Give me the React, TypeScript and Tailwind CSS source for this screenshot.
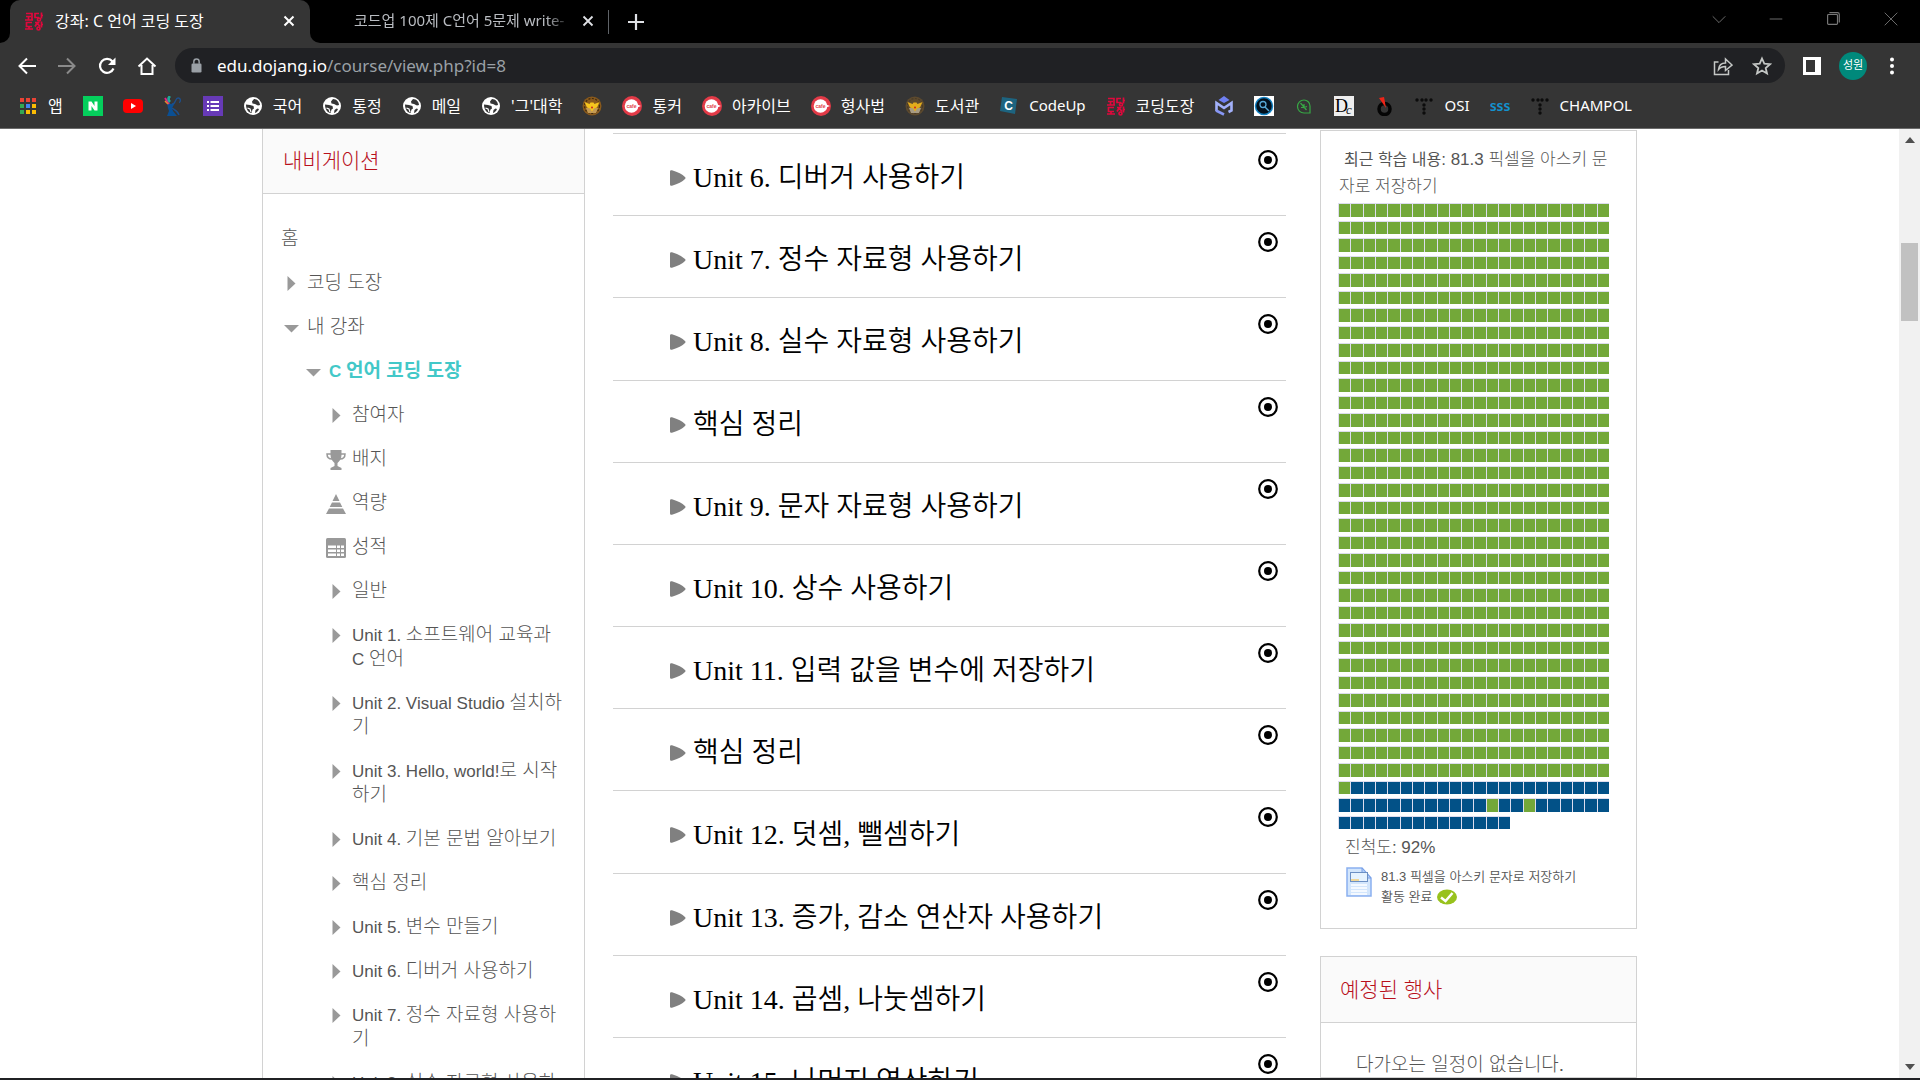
import type { ReactNode } from "react";

const UI = "font-['Noto_Sans','Noto_Sans_CJK_KR',sans-serif]";
const BODY = "font-['Liberation_Sans','Noto_Sans_CJK_KR',sans-serif]";
const SERIF = "font-['Liberation_Serif','Noto_Sans_CJK_KR',serif]";

/* ---------- bookmark icons ---------- */

function Box({ children }: { children: ReactNode }) {
  return (
    <svg viewBox="0 0 20 20" className="size-5 shrink-0" aria-hidden="true">
      {children}
    </svg>
  );
}

function AppsIcon() {
  const colors = ["#ea4335", "#ea4335", "#ea4335", "#34a853", "#4285f4", "#fbbc04", "#34a853", "#fbbc04", "#fbbc04"];
  return (
    <Box>
      {colors.map((c, i) => (
        <rect key={i} x={2 + (i % 3) * 6} y={2 + Math.floor(i / 3) * 6} width="4" height="4" fill={c} />
      ))}
    </Box>
  );
}

function NaverIcon() {
  return (
    <Box>
      <rect width="20" height="20" fill="#04cf5c" />
      <path d="M5.5 5.500h3l3 4.500V5.500h3v9h-3l-3-4.500v4.500h-3z" fill="#fff" />
    </Box>
  );
}

function YoutubeIcon() {
  return (
    <Box>
      <rect x="0" y="3" width="20" height="14" rx="4" fill="#f00" />
      <path d="M8 7l5 3-5 3z" fill="#fff" />
    </Box>
  );
}

function FigureIcon() {
  return (
    <Box>
      <path d="M4 7l4 1 4-1-3 5 1 3 4 5H4l2-5-1-3z" fill="#0a4f93" />
      <path d="M2 2l4 6" stroke="#e0218a" strokeWidth="2" />
      <path d="M7 0c-2 2-2 4 0 6" stroke="#1fa89a" strokeWidth="2.500" fill="none" />
      <path d="M9 8c4 0 3-6 6-6s3 4 1 4.500M9 12c3 2 6 3 7 7" stroke="#1d4f8c" strokeWidth="1.300" fill="none" />
      <path d="M2 5l3 3" stroke="#e8872b" strokeWidth="1.500" />
    </Box>
  );
}

function FormsIcon() {
  return (
    <Box>
      <rect width="20" height="20" fill="#673ab7" />
      <path d="M4 5h2v2H4zM7.500 5H16v2H7.500zM4 9h2v2H4zM7.500 9H16v2H7.500zM4 13h2v2H4zM7.500 13H16v2H7.500z" fill="#fff" />
    </Box>
  );
}

function GlobeIcon() {
  return (
    <Box>
      <circle cx="10" cy="10" r="9" fill="#fff" />
      <path d="M11 3l-2 2.500.5 2L12 8l3 1.500 2-.5c0-3-2.500-6-6-6z" fill="#353535" />
      <path d="M3 8.500l4 .5 3.500 1 .5 2.500-1.500 1-1 3.500C5.500 16.500 3 13.500 3 8.500z" fill="#353535" />
      <path d="M12 17l.5-3 2-1.500 1.500.5c-.8 2-2.200 3.500-4 4z" fill="#353535" />
      <path d="M4.500 12l2.500 1 1 3" stroke="#fff" strokeWidth="1.200" fill="none" />
    </Box>
  );
}

function PoliceIcon({ dim }: { dim?: boolean }) {
  return (
    <Box>
      <circle cx="10" cy="10" r="9.500" fill={dim ? "#5d4a2e" : "#8a5a1c"} />
      <circle cx="10" cy="10" r="7.500" fill="none" stroke={dim ? "#4a3c28" : "#3e2a10"} strokeWidth="1.200" strokeDasharray="2 1.500" />
      <path d="M4 12h12l-2 5H6z" fill={dim ? "#a79b84" : "#c39a55"} />
      <path d="M2.500 6l5 2 1-1.500h3l1 1.500 5-2-2.500 5.500-3 1L10 15.500 8 12.500l-3-1z" fill={dim ? "#e3ac1c" : "#f6c51e"} />
      <circle cx="10" cy="11.500" r="1" fill="#c22" />
    </Box>
  );
}

function CafeIcon() {
  return (
    <Box>
      <circle cx="10" cy="10" r="10" fill="#e23a47" />
      <circle cx="9.500" cy="10" r="6.800" fill="#fff" />
      <path d="M14 8l5 2-5 2z" fill="#fff" />
      <text x="9.500" y="12" textAnchor="middle" fontSize="5" fontWeight="700" fontFamily="Liberation Sans" fill="#e23a47">cafe</text>
    </Box>
  );
}

function CodeUpIcon() {
  return (
    <Box>
      <path d="M3 1l15 2-2 15-15-3z" fill="#1d6480" />
      <text x="9.500" y="14" textAnchor="middle" fontSize="12" fontWeight="700" fontFamily="Liberation Sans" fill="#fff">C</text>
    </Box>
  );
}

function DojangIcon() {
  return (
    <Box>
      <g stroke="#e0083c" strokeWidth="1.700" fill="none">
        <path d="M2 2.500h6v6M2 5.500h5M1 9h8M4.500 6v3" />
        <path d="M15 2.500h-4v4h4M17.500 1.500v6M17.500 4.500H19" />
        <circle cx="15" cy="8.500" r="1.500" />
        <path d="M8 11.500H2.500v4H8M5 15.500v2.500M1 18h8" />
        <path d="M11 11.500h4.500M13.500 11.500L11 15.500M13.500 12.500l2.500 3M17.500 10.500v6M17.500 13.500H19" />
        <circle cx="14.500" cy="17.500" r="1.500" />
      </g>
    </Box>
  );
}

function HexMIcon() {
  return (
    <Box>
      <path d="M4.500 4L10 0l5.500 4L10 7z" fill="#6f7ff0" />
      <path d="M2.500 15V7l7.500 5 7.500-5v7.500l-3 1.500" stroke="#a3b1fa" strokeWidth="2.600" fill="none" />
      <path d="M2 14.500l8 4" stroke="#8797f5" strokeWidth="2.600" />
    </Box>
  );
}

function MagnifierIcon() {
  return (
    <Box>
      <rect width="20" height="20" fill="#fff" />
      <circle cx="10" cy="10" r="8.500" fill="#03111d" stroke="#1182c4" strokeWidth="1.500" />
      <circle cx="9" cy="8.500" r="3" fill="none" stroke="#57a9d6" strokeWidth="1.300" />
      <path d="M11 11l4 4" stroke="#57a9d6" strokeWidth="1.500" />
    </Box>
  );
}

function LeafIcon() {
  return (
    <Box>
      <path d="M10 4a6 6 0 1 0 0 13h6v-7a6 6 0 0 0-6-6z" fill="none" stroke="#37a845" strokeWidth="1.200" />
      <path d="M6.500 7l6 7M10 8v3.500l3-1M7 11.500h3.500" stroke="#37a845" strokeWidth="1.200" fill="none" />
    </Box>
  );
}

function DcIcon() {
  return (
    <Box>
      <rect width="20" height="20" fill="#eee" />
      <text x="1" y="16" fontSize="18" fontFamily="Liberation Serif" fill="#000">D</text>
      <text x="12" y="18" fontSize="13" fontStyle="italic" fontFamily="Liberation Serif" fill="#222">c</text>
    </Box>
  );
}

function RingIcon() {
  return (
    <Box>
      <circle cx="10.500" cy="13" r="5.500" fill="none" stroke="#050505" strokeWidth="3.500" />
      <path d="M5 2l5-1 2 11z" fill="#ee2418" />
    </Box>
  );
}

function DotsIcon() {
  const dots = [[3, 4], [8, 4], [12, 4], [17, 4], [10, 9], [10, 13], [10, 17]];
  return (
    <Box>
      {dots.map(([x, y]) => (
        <circle key={`${x}-${y}`} cx={x} cy={y} r="1.700" fill="#0c0c0c" />
      ))}
    </Box>
  );
}

function SssIcon() {
  return (
    <Box>
      <text x="10" y="15" textAnchor="middle" fontSize="14" fontWeight="600" fontFamily="Noto Sans" fill="#1392cf">sss</text>
    </Box>
  );
}

type Bookmark = { icon: ReactNode; name: string; label?: string };

const bookmarks: Bookmark[] = [
  { icon: <AppsIcon />, name: "앱", label: "앱" },
  { icon: <NaverIcon />, name: "Naver" },
  { icon: <YoutubeIcon />, name: "YouTube" },
  { icon: <FigureIcon />, name: "학교" },
  { icon: <FormsIcon />, name: "Forms" },
  { icon: <GlobeIcon />, name: "국어", label: "국어" },
  { icon: <GlobeIcon />, name: "통정", label: "통정" },
  { icon: <GlobeIcon />, name: "메일", label: "메일" },
  { icon: <GlobeIcon />, name: "대학", label: "'그'대학" },
  { icon: <PoliceIcon />, name: "경찰" },
  { icon: <CafeIcon />, name: "통커", label: "통커" },
  { icon: <CafeIcon />, name: "아카이브", label: "아카이브" },
  { icon: <CafeIcon />, name: "형사법", label: "형사법" },
  { icon: <PoliceIcon dim />, name: "도서관", label: "도서관" },
  { icon: <CodeUpIcon />, name: "CodeUp", label: "CodeUp" },
  { icon: <DojangIcon />, name: "코딩도장", label: "코딩도장" },
  { icon: <HexMIcon />, name: "M" },
  { icon: <MagnifierIcon />, name: "검색" },
  { icon: <LeafIcon />, name: "Leaf" },
  { icon: <DcIcon />, name: "DC" },
  { icon: <RingIcon />, name: "Ring" },
  { icon: <DotsIcon />, name: "OSI", label: "OSI" },
  { icon: <SssIcon />, name: "sss" },
  { icon: <DotsIcon />, name: "CHAMPOL", label: "CHAMPOL" },
];

/* ---------- browser chrome ---------- */

function Stroke({ d, size, width = 2 }: { d: string; size: string; width?: number }) {
  return (
    <svg viewBox="0 0 20 20" className={size} fill="none" stroke="currentColor" strokeWidth={width} aria-hidden="true">
      <path d={d} />
    </svg>
  );
}

function TabStrip() {
  return (
    <div className="flex h-[43px] shrink-0 bg-black text-[15px] text-[#dfe1e5]">
      <div className="flex w-[10px] shrink-0 bg-[#353535]">
        <div className="w-full rounded-br-[10px] bg-black" />
      </div>
      <div className="flex w-[300px] shrink-0 items-center rounded-t-[10px] bg-[#353535] pr-3 pb-[2px] pl-[14px]">
        <DojangIcon />
        <span className="ml-[11px] flex-1 text-[16px] whitespace-nowrap text-white">강좌: C 언어 코딩 도장</span>
        <button aria-label="탭 닫기" className="text-white">
          <Stroke d="M5 5l10 10M15 5L5 15" size="size-[18px]" width={2.2} />
        </button>
      </div>
      <div className="flex w-[10px] shrink-0 bg-[#353535]">
        <div className="w-full rounded-bl-[10px] bg-black" />
      </div>
      <div className="flex w-[288px] shrink-0 items-center pb-[2px] pl-[34px]">
        <span className="w-[218px] whitespace-nowrap text-[#b9bcc1] [mask-image:linear-gradient(to_right,black_88%,transparent)]">
          코드업 100제 C언어 5문제 write-
        </span>
        <button aria-label="탭 닫기" className="ml-[7px] text-[#dfe1e5]">
          <Stroke d="M5 5l10 10M15 5L5 15" size="size-[18px]" />
        </button>
      </div>
      <div className="mt-[10px] h-6 w-px bg-[#5f6368]" />
      <button aria-label="새 탭" className="ml-[17px] text-[#dfe1e5]">
        <Stroke d="M10 2v16M2 10h16" size="size-5" width={2.2} />
      </button>
      <div className="ml-auto flex items-center pr-5 pb-[6px] text-[#777]">
        <button aria-label="탭 검색"><Stroke d="M3 7l7 7 7-7" size="size-[18px]" width={1} /></button>
        <button aria-label="최소화" className="ml-[39px]"><Stroke d="M3 10h14" size="size-[18px]" width={1} /></button>
        <button aria-label="최대화" className="ml-[39px]">
          <Stroke d="M4 6q0-1 1-1h9q1 0 1 1v9q0 1-1 1H5q-1 0-1-1zM6 3h9q2 0 2 2v9" size="size-[18px]" width={1.3} />
        </button>
        <button aria-label="닫기" className="ml-[40px]"><Stroke d="M3 3l14 14M17 3L3 17" size="size-[18px]" width={1} /></button>
      </div>
    </div>
  );
}

function Toolbar() {
  return (
    <div className="flex h-[44px] shrink-0 items-center bg-[#353535] pt-px text-white">
      <button aria-label="뒤로" className="ml-[17px]"><Stroke d="M19 10H2.500M10 2.500L2.500 10l7.500 7.500" size="size-5" /></button>
      <button aria-label="앞으로" className="ml-[20px] text-[#8a8a8a]"><Stroke d="M1 10h16.500M10 2.500l7.500 7.500-7.500 7.500" size="size-5" /></button>
      <button aria-label="새로고침" className="ml-[20px]">
        <svg viewBox="0 0 20 20" className="size-5" aria-hidden="true">
          <path d="M16.500 12.500A7 7 0 1 1 15.500 5.500" fill="none" stroke="currentColor" strokeWidth="2.200" />
          <path d="M18.500 1.500v7.500H11z" fill="currentColor" />
        </svg>
      </button>
      <button aria-label="홈" className="ml-[20px]"><Stroke d="M1.500 10.500L10 2.500l8.500 8M4.500 9v9h11V9" size="size-5" /></button>
      <div className="ml-[18px] flex h-[35px] flex-1 items-center rounded-full bg-[#202124] pr-[13px] pl-[15px]">
        <svg viewBox="0 0 14 18" className="h-[15px] w-[13px] text-[#9aa0a6]" aria-hidden="true">
          <rect x="1" y="6.500" width="12" height="11" rx="1.500" fill="currentColor" />
          <path d="M3.800 7V4.500a3.200 3.200 0 0 1 6.400 0V7" fill="none" stroke="currentColor" strokeWidth="1.800" />
        </svg>
        <a href="#url" className="ml-[14px] flex-1 text-[17px] text-[#9aa0a6]">
          <span className="text-white">edu.dojang.io</span>/course/view.php?id=8
        </a>
        <button aria-label="공유" className="text-[#c4c7c5]">
          <Stroke d="M5.500 6H1.500v12.500h14V14M5.500 13.500c.5-5 3.500-6.500 7-6.500V3l6.500 6-6.500 5.500v-4c-3 0-5 .5-7 3z" size="size-5" width={1.5} />
        </button>
        <button aria-label="북마크" className="ml-[19px] text-[#c4c7c5]">
          <Stroke d="M10 2.500l2.300 5.200 5.700.5-4.300 3.800 1.300 5.500-5-3-5 3 1.300-5.500L2 8.200l5.700-.5z" size="size-5" width={1.8} />
        </button>
      </div>
      <button aria-label="사이드 패널" className="ml-[18px]">
        <svg viewBox="0 0 18 18" className="size-[18px]" aria-hidden="true">
          <path d="M0 0h18v18H0zM3 3v12h9V3z" fill="#fff" fillRule="evenodd" />
        </svg>
      </button>
      <button aria-label="프로필" className="ml-[18px] flex size-7 items-center justify-center rounded-full bg-[#00897b] text-[11px]">성원</button>
      <button aria-label="메뉴" className="mr-[18px] ml-[15px]">
        <svg viewBox="0 0 20 20" className="size-5" fill="#fff" aria-hidden="true">
          <circle cx="10" cy="3.500" r="2" />
          <circle cx="10" cy="10" r="2" />
          <circle cx="10" cy="16.500" r="2" />
        </svg>
      </button>
    </div>
  );
}

function BookmarksBar() {
  return (
    <nav aria-label="북마크" className="flex h-[42px] shrink-0 items-center gap-5 border-b border-[#6b6b6b] bg-[#353535] pb-1 pl-[18px] text-white">
      {bookmarks.map((b, i) => (
        <a key={i} href="#bookmark" aria-label={b.name} className="flex items-center gap-[10px] whitespace-nowrap">
          {b.icon}
          {b.label && <span className={/[가-힣]/.test(b.label) ? "text-[16px]" : "text-[15px]"}>{b.label}</span>}
        </a>
      ))}
    </nav>
  );
}

/* ---------- left navigation ---------- */

/* Hangul runs are set slightly larger than the Latin text around them. */
function Mixed({ text }: { text: string }) {
  return text.split(/([가-힣]+(?: [가-힣]+)*)/).map((part, i) =>
    i % 2 === 1 ? (
      <span key={i} className="text-[19px] leading-5">{part}</span>
    ) : (
      part
    ),
  );
}

function Caret({ open }: { open?: boolean }) {
  return (
    <svg viewBox="0 0 20 20" className="size-5" fill="#999" aria-hidden="true">
      {open ? <path d="M3 7h15l-7.500 7.500z" /> : <path d="M6.500 2v15l8-7.500z" />}
    </svg>
  );
}

function TrophyIcon() {
  return (
    <svg viewBox="0 0 20 20" className="size-5" aria-hidden="true">
      <path d="M4.500 0h11v5c0 4-2 6-4 8v3l4 2v2h-11v-2l4-2v-3c-2-2-4-4-4-8z" fill="#999" />
      <path d="M5 4H1c0 3 2 5 5 5M15 4h4c0 3-2 5-5 5" fill="none" stroke="#999" strokeWidth="1.500" />
    </svg>
  );
}

function PyramidIcon() {
  return (
    <svg viewBox="0 0 20 20" className="size-5" fill="#999" aria-hidden="true">
      <path d="M10 0l3.500 7h-7zM6 8.500h8l2.300 4.500H3.700zM3 14.500h14L20 20H0z" />
    </svg>
  );
}

function GradesIcon() {
  return (
    <svg viewBox="0 0 20 20" className="size-5" aria-hidden="true">
      <rect width="20" height="20" rx="1.500" fill="#999" />
      <path d="M2 7.500h8v2.500H2zM2 11.500h8V14H2zM2 15.500h8V18H2zM11 7.500h3v2.500h-3zM11 11.500h3V14h-3zM11 15.500h3V18h-3zM15 7.500h3v2.500h-3zM15 11.500h3V14h-3zM15 15.500h3V18h-3z" fill="#fff" />
    </svg>
  );
}

type NavItem = { text: string; level: 0 | 1 | 2 | 3; icon?: ReactNode; active?: boolean };

const closed = <Caret />;
const navItems: NavItem[] = [
  { text: "홈", level: 0 },
  { text: "코딩 도장", level: 1, icon: closed },
  { text: "내 강좌", level: 1, icon: <Caret open /> },
  { text: "C 언어 코딩 도장", level: 2, icon: <Caret open />, active: true },
  { text: "참여자", level: 3, icon: closed },
  { text: "배지", level: 3, icon: <TrophyIcon /> },
  { text: "역량", level: 3, icon: <PyramidIcon /> },
  { text: "성적", level: 3, icon: <GradesIcon /> },
  { text: "일반", level: 3, icon: closed },
  { text: "Unit 1. 소프트웨어 교육과 C 언어", level: 3, icon: closed },
  { text: "Unit 2. Visual Studio 설치하기", level: 3, icon: closed },
  { text: "Unit 3. Hello, world!로 시작하기", level: 3, icon: closed },
  { text: "Unit 4. 기본 문법 알아보기", level: 3, icon: closed },
  { text: "핵심 정리", level: 3, icon: closed },
  { text: "Unit 5. 변수 만들기", level: 3, icon: closed },
  { text: "Unit 6. 디버거 사용하기", level: 3, icon: closed },
  { text: "Unit 7. 정수 자료형 사용하기", level: 3, icon: closed },
  { text: "Unit 8. 실수 자료형 사용하기", level: 3, icon: closed },
];

const indent = ["pl-[18px]", "pl-[18px]", "pl-[40px]", "pl-[63px]"];

function Navigation() {
  return (
    <aside className="w-[323px] shrink-0 border-x border-[#d2d2d2]">
      <h2 className="flex h-[65px] items-center border-b border-[#d2d2d2] bg-[#fafafa] pl-5 text-[21px] font-light text-[#b8101c]">내비게이션</h2>
      <ul className="pt-6 text-[17px] leading-6 font-light text-[#555]">
        {navItems.map((n, i) => (
          <li key={i} className={`flex py-[10px] pr-5 ${indent[n.level]}`}>
            {n.icon && <span className="mt-[2px] mr-[6px] shrink-0">{n.icon}</span>}
            <a href="#nav" className={n.active ? "font-bold text-[#42c8c8]" : ""}><Mixed text={n.text} /></a>
          </li>
        ))}
      </ul>
    </aside>
  );
}

/* ---------- course units ---------- */

const units = [
  "Unit 6. 디버거 사용하기",
  "Unit 7. 정수 자료형 사용하기",
  "Unit 8. 실수 자료형 사용하기",
  "핵심 정리",
  "Unit 9. 문자 자료형 사용하기",
  "Unit 10. 상수 사용하기",
  "Unit 11. 입력 값을 변수에 저장하기",
  "핵심 정리",
  "Unit 12. 덧셈, 뺄셈하기",
  "Unit 13. 증가, 감소 연산자 사용하기",
  "Unit 14. 곱셈, 나눗셈하기",
  "Unit 15. 나머지 연산하기",
];

function Units() {
  return (
    <main className="min-w-0 flex-1 pt-1">
      <ul className="flex h-[986px] flex-col">
        {units.map((u, i) => (
          <li key={i} className="flex min-h-0 flex-1 items-start border-t border-[#d2d2d2] pr-2 pl-14">
            <button className="flex items-center gap-[7px] pt-[26px]">
              <svg viewBox="0 0 17 16" className="h-4 w-[17px]" fill="#808080" aria-hidden="true">
                <path d="M1 1.500Q1-.3 3 .3Q12 3 16 7q1 1 0 2Q12 13 3 15.700Q1 16.300 1 14.500z" />
              </svg>
              <h3 className={`text-[28px] leading-9 font-[350] whitespace-nowrap text-black ${SERIF}`}>{u}</h3>
            </button>
            <svg viewBox="0 0 20 20" className="mt-4 ml-auto size-5" aria-hidden="true">
              <circle cx="10" cy="10" r="8.800" fill="none" stroke="#000" strokeWidth="2.200" />
              <circle cx="10" cy="10" r="4" fill="#000" />
            </svg>
          </li>
        ))}
      </ul>
    </main>
  );
}

/* ---------- right blocks ---------- */

const COLUMNS = 22;
const progressRows: (boolean | null)[][] = Array.from({ length: 36 }, (_, r) =>
  Array.from({ length: COLUMNS }, (_, c) => {
    if (r < 33) return true;
    if (r === 33) return c === 0;
    if (r === 34) return c === 12 || c === 15;
    return c < 14 ? false : null;
  }),
);

function cellColor(done: boolean | null) {
  if (done === null) return "border-transparent";
  return done ? "border-[#dde] bg-[#73a839]" : "border-[#dde] bg-[#025187]";
}

function Progress() {
  return (
    <section className="border border-[#d2d2d2] pr-[27px] pb-[21px] pl-[17px] font-light text-[#555]">
      <p className="pt-[15px] pl-px indent-[5px] text-[17px] leading-[27px]">
        <span className="text-[16px] font-normal">최근 학습 내용</span>: 81.3 픽셀을 아스키 문자로 저장하기
      </p>
      <div className="mt-[3px] flex h-[630px] flex-col" role="img" aria-label="진척도 92%">
        {progressRows.map((row, r) => (
          <div key={r} className="flex flex-1 pb-1">
            {row.map((done, c) => (
              <span key={c} className={`flex-1 border-t border-l ${cellColor(done)}`} />
            ))}
          </div>
        ))}
      </div>
      <p className="pl-[7px] text-[17px] leading-[30px]">진척도: 92%</p>
      <div className="mt-1 flex pl-2 text-[13px] leading-5">
        <svg viewBox="0 0 26 30" className="h-[30px] w-[26px]" aria-hidden="true">
          <path d="M1 1h15l9 10v18H1z" fill="#d3e6fc" stroke="#8ab0f0" strokeWidth="1.500" />
          <path d="M16 1v10h9z" fill="#b5d2fa" stroke="#7aa0e6" />
          <rect x="4.500" y="5.500" width="17" height="9" fill="#e6f3ff" stroke="#6c90c4" />
          <path d="M5 12h8v2H5z" fill="#efd79a" />
          <path d="M5 18h16M5 21h16M5 24h16M5 27h16" stroke="#fff" strokeWidth="1.500" />
        </svg>
        <div className="ml-[9px] font-[350]">
          <a href="#activity" className="block">81.3 픽셀을 아스키 문자로 저장하기</a>
          <span className="flex items-center gap-[5px]">
            활동 완료
            <svg viewBox="0 0 20 16" className="h-4 w-5" aria-hidden="true">
              <ellipse cx="10" cy="8" rx="10" ry="7.500" fill="#98c21d" />
              <path d="M4 8.500l4.500 3.500 7-8" fill="none" stroke="#fff" strokeWidth="2.500" />
            </svg>
          </span>
        </div>
      </div>
    </section>
  );
}

function Upcoming() {
  return (
    <section className="border border-[#d2d2d2]">
      <h2 className="flex h-[66px] items-center border-b border-[#d2d2d2] bg-[#fafafa] pl-[19px] text-[21px] font-light text-[#b8101c]">예정된 행사</h2>
      <p className="pt-[30px] pl-[35px] text-[19px] leading-6 font-light whitespace-nowrap text-[#555]">다가오는 일정이 없습니다.</p>
    </section>
  );
}

function Scrollbar() {
  return (
    <div className="flex w-[21px] shrink-0 flex-col items-center bg-[#f1f1f1]" aria-hidden="true">
      <svg viewBox="0 0 10 6" className="mt-2 h-[6px] w-[10px]" fill="#505050"><path d="M5 0l5 6H0z" /></svg>
      <div className="mt-[100px] h-[78px] w-[17px] bg-[#c1c1c1]" />
      <svg viewBox="0 0 10 6" className="mt-auto mb-2 h-[6px] w-[10px]" fill="#505050"><path d="M0 0h10L5 6z" /></svg>
    </div>
  );
}

export default function App() {
  return (
    <div className={`flex h-screen flex-col overflow-hidden bg-white ${UI}`}>
      <TabStrip />
      <Toolbar />
      <BookmarksBar />
      <div className="flex min-h-0 flex-1">
        <div className={`flex-1 overflow-hidden ${BODY}`}>
          <div className="mx-auto flex max-w-[1375px]">
            <Navigation />
            <div className="w-7 shrink-0" />
            <Units />
            <div className="ml-[34px] flex w-[317px] shrink-0 flex-col gap-[27px] pt-px">
              <Progress />
              <Upcoming />
            </div>
          </div>
        </div>
        <Scrollbar />
      </div>
      <div className="h-[2px] shrink-0 bg-[#202124]" />
    </div>
  );
}
